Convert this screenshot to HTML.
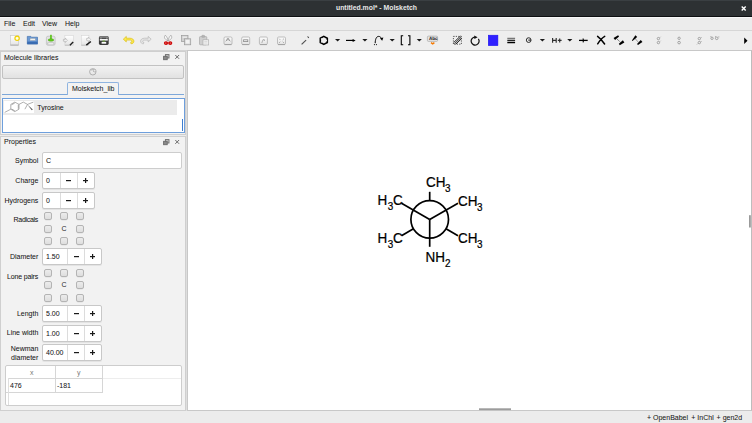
<!DOCTYPE html>
<html><head><meta charset="utf-8">
<style>
*{margin:0;padding:0;box-sizing:border-box}
html,body{width:752px;height:423px;overflow:hidden;background:#ececec;font-family:"Liberation Sans",sans-serif;font-size:7px;color:#141414;position:relative;-webkit-text-stroke:0.04px #111}
.a{position:absolute}
.t{position:absolute;white-space:nowrap;line-height:1}
#title{left:0;top:0;width:752px;height:17px;background:#2d3133;border-bottom:1px solid #0e1012;border-top:1px solid #3a3f42}
#menubar{left:0;top:17px;width:752px;height:14px;background:#ececec;border-top:1px solid #f8f8f8;border-bottom:1px solid #d6d6d6}
#toolbar{left:0;top:31px;width:752px;height:20px;background:#eeeeee;border-bottom:1px solid #d4d4d4}
.dock{position:absolute;border:1px solid #cfcfcf;background:#f2f2f2}
.field{position:absolute;background:#fff;border:1px solid #cdcdcd;border-radius:2px}
.spin{position:absolute;background:#fff;border:1px solid #c8c8c8;border-radius:2px;height:17px;box-shadow:0 1px 0 rgba(0,0,0,0.06)}
.spin .s1,.spin .s2{position:absolute;top:0;height:15px;border-left:1px solid #dcdcdc}
.cb{position:absolute;width:8px;height:8px;border:1px solid #b4b4b4;border-radius:2px;background:linear-gradient(#ececec,#dedede);box-shadow:0 0.5px 0 rgba(0,0,0,0.08)}
.pm{font-size:9px;font-weight:bold}
.mi{width:5px;height:1px;background:#1a1a1a;box-shadow:0 0.6px 0 rgba(26,26,26,.35)}.pl{width:1px;height:5px;background:#1a1a1a;box-shadow:0.6px 0 0 rgba(26,26,26,.35)}.fv{-webkit-text-stroke:0.05px #1e1e1e}.cc{-webkit-text-stroke:0;color:#2a2a2a}
.lbl{position:absolute;white-space:nowrap;line-height:1;text-align:right;width:40px}
</style></head><body>
<div id="title" class="a"></div>
<div class="t" style="left:336px;top:5px;color:#e8e8e8;font-weight:bold;font-size:6.85px;-webkit-text-stroke:0">untitled.mol* - Molsketch</div>
<svg class="a" style="left:738px;top:3px" width="12" height="12"><path d="M3.7 3.6 l4 4 M7.7 3.6 l-4 4" stroke="#fff" stroke-width="1.4"/></svg>
<div id="menubar" class="a"></div>
<div class="t" style="left:4px;top:20.4px">File</div>
<div class="t" style="left:23px;top:20.4px">Edit</div>
<div class="t" style="left:42px;top:20.4px">View</div>
<div class="t" style="left:65px;top:20.4px">Help</div>
<div id="toolbar" class="a"></div>


<!-- toolbar icons -->
<svg class="a" style="left:0;top:0" width="752" height="52" viewBox="0 0 752 52">
<defs>
<linearGradient id="pg" x1="0" y1="0" x2="0" y2="1"><stop offset="0" stop-color="#ffffff"/><stop offset="1" stop-color="#e4e4e4"/></linearGradient>
<linearGradient id="fg" x1="0" y1="0" x2="0" y2="1"><stop offset="0" stop-color="#7aa6d8"/><stop offset="1" stop-color="#3465a4"/></linearGradient>
<linearGradient id="bx" x1="0" y1="0" x2="0" y2="1"><stop offset="0" stop-color="#fdfdfd"/><stop offset="1" stop-color="#e2e2e2"/></linearGradient>
</defs>
<!-- new -->
<rect x="10.4" y="35.6" width="8.2" height="9.5" fill="url(#pg)" stroke="#c4c4c4" stroke-width="0.6"/>
<path d="M10.4 45.1 h8.2" stroke="#9a9a9a" stroke-width="0.7"/>
<circle cx="17.1" cy="38.3" r="2.2" fill="#fff7b0" stroke="#f0d000" stroke-width="1.1"/>
<circle cx="17.1" cy="38.3" r="1.1" fill="#fffef0"/>
<!-- open -->
<path d="M27.3 37.9 v-1.5 h3.6 l0.7 0.8 h5.9 v6.9 h-10.2 z" fill="#6a9ad6" stroke="#3465a4" stroke-width="0.6"/>
<rect x="30" y="38.3" width="5.4" height="2.3" fill="#f2f2ee" stroke="#7a8aa0" stroke-width="0.4"/>
<rect x="27.3" y="41.6" width="10.2" height="2.5" fill="#3a6cb2"/>
<!-- save -->
<rect x="46.4" y="36.2" width="8.7" height="9.1" rx="1.6" fill="#e2e2e2" stroke="#b4b4b4" stroke-width="0.6"/>
<rect x="47" y="42.2" width="7.5" height="2.8" rx="0.8" fill="#c8c8c8"/>
<rect x="48.3" y="43" width="5" height="1.4" fill="#ececec"/>
<rect x="50.1" y="34.8" width="1.7" height="4.4" fill="#5cc41a"/>
<ellipse cx="50.95" cy="40" rx="2.9" ry="1.25" fill="#66cc22" stroke="#3d9a0a" stroke-width="0.4"/>
<!-- import -->
<rect x="64.9" y="35.6" width="8.6" height="9.6" fill="url(#pg)" stroke="#d2d2d2" stroke-width="0.5"/>
<path d="M64.9 45.2 h6" stroke="#aaa" stroke-width="0.6"/>
<path d="M63.4 39.4 h1.9 v-1.3 l2.1 2.2 l-2.1 2.2 v-1.3 h-1.9 z" fill="#f6f6f6" stroke="#a8a8a8" stroke-width="0.6"/>
<path d="M69.9 45.2 l3.3 -3.1" stroke="#1e1e1e" stroke-width="1.4"/>
<!-- export -->
<rect x="81.3" y="35.6" width="7.6" height="9.6" fill="url(#pg)" stroke="#d2d2d2" stroke-width="0.5"/>
<path d="M81.3 45.2 h5" stroke="#aaa" stroke-width="0.6"/>
<path d="M86.6 38.4 h1.7 v-1.4 l2.3 2.4 l-2.3 2.4 v-1.4 h-1.7 z" fill="#f6f6f6" stroke="#b0b0b0" stroke-width="0.6"/>
<path d="M86.3 45.1 l4.5 -3.6" stroke="#1a1a1a" stroke-width="1.6"/>
<!-- print -->
<rect x="98.9" y="36.3" width="9.8" height="8.6" rx="1.4" fill="#3a3a3a"/>
<rect x="99.6" y="36.6" width="8.4" height="2.2" rx="0.8" fill="#8a8a8a"/>
<rect x="101.8" y="37.8" width="4.2" height="0.8" fill="#333"/>
<rect x="99.8" y="39" width="8" height="1.6" fill="#f4f4f4"/>
<rect x="102.5" y="40.6" width="2.6" height="0.9" fill="#6ab02a"/>
<rect x="101.6" y="41.9" width="4.6" height="1.8" fill="#fafafa"/>
<!-- undo -->
<path d="M123.3 39.2 l3 -2.8 v1.8 h3.6 c2.6 0 4 1.4 4 3 c0 1.6 -1.3 2.6 -2.8 2.6 l-0.6 -1.2 c0.8 0 1.3 -0.6 1.3 -1.3 c0 -0.8 -0.8 -1.2 -2 -1.2 h-3.5 v1.8 z" fill="#fce94f" stroke="#d8b800" stroke-width="0.6"/>
<!-- redo -->
<path d="M151.2 39.2 l-3 -2.8 v1.8 h-3.6 c-2.6 0 -4 1.4 -4 3 c0 1.6 1.3 2.6 2.8 2.6 l0.6 -1.2 c-0.8 0 -1.3 -0.6 -1.3 -1.3 c0 -0.8 0.8 -1.2 2 -1.2 h3.5 v1.8 z" fill="#e6e6e6" stroke="#b0b0b0" stroke-width="0.6"/>
<!-- cut -->
<path d="M165.3 35.2 C163.8 37 164.2 39.2 168.1 40.8 C167.6 38.6 167 36.8 165.3 35.2 z" fill="#fafafa" stroke="#9a9a9a" stroke-width="0.7"/>
<path d="M170.9 35.2 C172.4 37 172 39.2 168.1 40.8 C168.6 38.6 169.2 36.8 170.9 35.2 z" fill="#fafafa" stroke="#9a9a9a" stroke-width="0.7"/>
<ellipse cx="166" cy="43.1" rx="2.1" ry="1.9" fill="#cc0000"/>
<ellipse cx="170.2" cy="43.1" rx="2.1" ry="1.9" fill="#cc0000"/>
<ellipse cx="165.8" cy="43.1" rx="0.9" ry="0.5" fill="#e88"/>
<ellipse cx="170.4" cy="43.1" rx="0.9" ry="0.5" fill="#e88"/>
<!-- copy -->
<rect x="181.5" y="35.6" width="6.5" height="6" fill="#d0d0d0" stroke="#9a9a9a" stroke-width="0.7"/>
<rect x="182.6" y="36.6" width="4.3" height="1.2" fill="#eee"/>
<rect x="184.5" y="38.8" width="6.2" height="6" fill="#dadada" stroke="#9a9a9a" stroke-width="0.7"/>
<rect x="185.8" y="40" width="3.6" height="3.5" fill="#f2f2f2"/>
<!-- paste -->
<rect x="199.5" y="36.6" width="7.3" height="8.2" rx="0.8" fill="#cfcfcf" stroke="#a0a0a0" stroke-width="0.6"/>
<rect x="201.8" y="35.3" width="2.8" height="2" rx="0.5" fill="#b5b5b5" stroke="#999" stroke-width="0.4"/>
<rect x="203" y="39.8" width="5.7" height="5.2" fill="#f0f0f0" stroke="#aaa" stroke-width="0.6"/>
<path d="M204.3 41.5 h3 M204.3 43 h3" stroke="#c8c8c8" stroke-width="0.5"/>
<!-- 4 disabled boxes -->
<g stroke="#a8a8a8" stroke-width="0.7" fill="url(#bx)">
<rect x="224" y="37" width="8" height="7.5" rx="1.2"/>
<rect x="241.7" y="37" width="8" height="7.5" rx="1.2"/>
<rect x="259.4" y="37" width="8" height="7.5" rx="1.2"/>
<rect x="277.5" y="37" width="8" height="7.5" rx="1.2"/>
</g>
<g stroke="#8a8a8a" stroke-width="0.8" fill="none">
<path d="M224.5 44.6 h7 M242.2 44.6 h7 M259.9 44.6 h7 M278 44.6 h7" stroke="#999"/>
<path d="M225.6 41.2 l2.4 -1.8 l2.4 1.8 M226.6 39.6 a1.4 1 0 0 1 2.8 0"/>
<rect x="243.6" y="39.8" width="4.2" height="1.8" />
<path d="M261.8 43 l1.2 -3.4 l1.6 0.2 l-0.4 1.2" stroke-width="0.6"/>
<path d="M279 38.6 l1.3 1.3 M284 38.6 l-1.3 1.3 M279 43 l1.3 -1.3 M284 43 l-1.3 -1.3" stroke-width="0.6"/>
</g>
<!-- pen -->
<path d="M301.6 44.3 l4.5 -4.2" stroke="#505050" stroke-width="1.15" fill="none"/>
<path d="M307 36.3 l2.2 0.8 l-0.9 1.1 z" fill="#333"/>
<!-- ring -->
<path d="M323.8 36.4 l3.5 1.9 v4.2 l-3.5 1.9 l-3.5 -1.9 v-4.2 z" fill="none" stroke="#000" stroke-width="1.6" stroke-linejoin="round"/>
<circle cx="321.4" cy="38.9" r="0.6" fill="#f4f4f4"/><circle cx="326.4" cy="40.4" r="0.6" fill="#f4f4f4"/><circle cx="321.4" cy="42" r="0.6" fill="#f4f4f4"/>
<!-- dropdowns -->
<g fill="#1a1a1a">
<path d="M335 39 h5.2 l-2.6 2.6 z"/>
<path d="M362.3 39 h5.2 l-2.6 2.6 z"/>
<path d="M389.6 39 h5.2 l-2.6 2.6 z"/>
<path d="M416.7 39 h5.2 l-2.6 2.6 z"/>
<path d="M539.8 38.9 h5.2 l-2.6 2.6 z"/>
<path d="M567.2 38.9 h5.2 l-2.6 2.6 z"/>
</g>
<!-- arrow -->
<path d="M346 40.4 h7.5" stroke="#000" stroke-width="1.15"/>
<path d="M352.6 38.9 l3 1.5 l-3 1.5 z" fill="#000"/>
<!-- curved arrow -->
<path d="M375.2 43.2 c0 -3.5 1 -6.8 3.4 -6.8 c1.2 0 2 0.6 2.6 1.6" stroke="#000" stroke-width="1" fill="none"/>
<polygon points="380,38.3 383.4,37.6 382.2,40.8" fill="#000"/>
<circle cx="374.4" cy="44.6" r="0.55" fill="#000"/><circle cx="376.4" cy="44.6" r="0.55" fill="#000"/>
<!-- brackets -->
<path d="M403.2 35.8 h-1.9 v9 h1.9 M408 35.8 h1.9 v9 h-1.9" stroke="#000" stroke-width="1.1" fill="none"/>
<!-- Abc -->
<rect x="427.4" y="36.1" width="10.2" height="5.3" rx="1" fill="#e4e4e4" stroke="#a0a0a0" stroke-width="0.6"/>
<text x="428.9" y="40.3" font-family="Liberation Sans" font-size="4.6" font-weight="bold" fill="#222" style="-webkit-text-stroke:0;text-rendering:geometricPrecision">Abc</text>
<path d="M431 42.6 l1.7 1.3 l1.7 -1.3" stroke="#f57900" stroke-width="1.4" fill="none"/>
<!-- hatched -->
<rect x="453.4" y="36.4" width="8" height="7.8" fill="none" stroke="#333" stroke-width="0.8" stroke-dasharray="1.2 1.2"/>
<path d="M453.6 42.6 l6.8 -6.5 M454.4 43.8 l7 -6.8 M455.8 44.2 l5.7 -5.6" stroke="#111" stroke-width="0.9"/>
<!-- rotate -->
<path d="M478.4 38.8 A4 4 0 1 1 475.1 37.1" stroke="#111" stroke-width="1.25" fill="none"/>
<polygon points="474.2,35.6 477.6,37.3 474.4,39" fill="#111"/>
<!-- blue -->
<rect x="487.6" y="34.6" width="11" height="11.4" fill="#ffffe6" opacity="0.7"/>
<rect x="488.3" y="35.2" width="9.6" height="10.4" fill="#3020ff" stroke="#1a10f0" stroke-width="0.6"/>
<!-- lines -->
<path d="M507.3 38.3 h7.8" stroke="#333" stroke-width="0.8"/>
<path d="M507.3 40.3 h7.8" stroke="#000" stroke-width="1.1"/>
<path d="M507.3 42.5 h7.8" stroke="#000" stroke-width="1.5"/>
<!-- charge -->
<circle cx="528.7" cy="40.1" r="2.35" fill="none" stroke="#222" stroke-width="0.95"/>
<path d="M528.3 40.1 h2.6" stroke="#222" stroke-width="1.1"/>
<!-- H+ -->
<path d="M552.6 37.9 v4.9 M556.2 37.9 v4.9 M552.6 40.3 h3.6 M557.8 40.4 h3.8 M559.7 38.5 v3.9" stroke="#2e2e2e" stroke-width="1.15" fill="none"/>
<!-- -|- -->
<path d="M579 40.4 h8.7" stroke="#000" stroke-width="1.3"/>
<path d="M583.3 38.5 c-0.4 1 0.4 1.6 -0.2 3.8" stroke="#000" stroke-width="1.1" fill="none"/>
<!-- X -->
<path d="M597.6 36.4 c3 2.2 5 4.8 7 7.6 M604.7 36.4 c-3 1.6 -5 4.4 -7 7.4" stroke="#000" stroke-width="1.5" stroke-linecap="round" fill="none"/>
<!-- wedge bonds -->
<polygon points="615.06,40.05 613.54,37.95 618.13,35.25 619.07,36.55" fill="#000"/>
<polygon points="619.77,45.15 618.83,43.85 622.84,40.35 624.36,42.45" fill="#000"/>
<path d="M617.2 39.2 L620.3 42.1" stroke="#000" stroke-width="0.7" stroke-dasharray="0.9 0.7"/>
<polygon points="632.5,40.97 631.9,40.43 635.4,35.3 637.2,36.9" fill="#000"/>
<polygon points="638.01,45.12 636.99,43.88 640.77,40.1 642.43,42.1" fill="#000"/>
<path d="M634.9 38.3 L638.2 42.1" stroke="#000" stroke-width="0.7" stroke-dasharray="0.9 0.7"/>
<!-- small O O icons -->
<g stroke="#808080" stroke-width="0.65" fill="none">
<circle cx="658.4" cy="38.6" r="1.2"/><circle cx="658.4" cy="42.6" r="1.2"/>
<path d="M660.6 36.8 l-0.8 0.8 M660.6 40.8 l-0.8 0.8"/>
<circle cx="679.1" cy="38.3" r="1.2"/><circle cx="679.1" cy="42.6" r="1.3"/>
<circle cx="699.3" cy="38.6" r="1.2"/><circle cx="699.3" cy="42.6" r="1.2"/>
<path d="M701.4 37.2 l-0.6 0.9 M701.4 41.2 l-0.6 0.9 M697 44.4 l0.6 -0.7"/>
<circle cx="712" cy="38.3" r="1.2"/><circle cx="716.7" cy="38.3" r="1.3"/>
<path d="M710.6 36.2 l0.7 0.8 M715.3 36.2 l0.7 0.8 M718.8 36.4 v1"/>
</g>
<!-- more arrow -->
<path d="M744.2 37.5 l3.3 3.2 l-3.3 3.2 z" fill="#000"/>
</svg>
<!-- canvas -->
<div class="a" style="left:186px;top:51px;width:1px;height:360px;background:#dedede"></div>
<div class="a" style="left:187px;top:50px;width:565px;height:361px;background:#fff;border:1px solid #c8c8c8;border-right:1px solid #bdbdbd"></div>


<!-- molecule -->
<svg class="a" style="left:0;top:0" width="752" height="423" viewBox="0 0 752 423">
<g stroke="#000" stroke-width="1.7" fill="none" stroke-linecap="butt">
<circle cx="429.7" cy="219.4" r="18.8"/>
<line x1="429.7" y1="191.8" x2="429.7" y2="200.6"/>
<line x1="413.4" y1="228.8" x2="401.5" y2="235.7"/>
<line x1="446" y1="228.8" x2="458" y2="235.7"/>
<line x1="429.7" y1="219.4" x2="401.5" y2="203.3"/>
<line x1="429.7" y1="219.4" x2="458" y2="203.3"/>
<line x1="429.7" y1="219.4" x2="429.7" y2="246.8"/>
</g>
<g font-family="Liberation Sans" fill="#000" font-size="15" stroke="#000" stroke-width="0.25">
<text transform="translate(426,187.3) scale(0.9,1)">CH<tspan font-size="11" dy="4.7" dx="-0.5">3</tspan></text>
<text transform="translate(377.4,205.3) scale(0.9,1)">H<tspan font-size="11" dy="4.7" dx="0.8">3</tspan><tspan dy="-4.7" dx="-0.4">C</tspan></text>
<text transform="translate(458,205.8) scale(0.9,1)">CH<tspan font-size="11" dy="4.7" dx="-0.4">3</tspan></text>
<text transform="translate(377.4,243.3) scale(0.9,1)">H<tspan font-size="11" dy="4.7" dx="0.8">3</tspan><tspan dy="-4.7" dx="-0.4">C</tspan></text>
<text transform="translate(458,243.3) scale(0.9,1)">CH<tspan font-size="11" dy="4.7" dx="-0.4">3</tspan></text>
<text transform="translate(425.6,261.8) scale(0.9,1)">NH<tspan font-size="11" dy="4.7" dx="0">2</tspan></text>
</g>
<rect x="749" y="215.2" width="1.8" height="12.3" fill="#9a9a9a"/>
<rect x="479" y="408.3" width="32" height="1.8" fill="#9c9c9c"/>
</svg>
<!-- dock 1 -->
<div class="dock" style="left:0px;top:51px;width:186px;height:84px"></div>
<div class="t" style="left:4px;top:54px">Molecule libraries</div>
<div class="a" style="left:2px;top:65px;width:182px;height:14px;border:1px solid #c2c2c2;border-radius:2px;background:linear-gradient(#f2f2f2,#e2e2e2)"></div>
<div class="a" style="left:67px;top:82px;width:52px;height:13px;border:1px solid #8fb4e0;border-bottom:none;border-radius:2px 2px 0 0;background:#f3f3f3"></div>
<div class="t" style="left:72px;top:85px">Molsketch_lib</div>
<div class="a" style="left:2px;top:94px;width:65px;height:1px;background:#7da7d9"></div>
<div class="a" style="left:119px;top:94px;width:65px;height:1px;background:#7da7d9"></div>
<div class="a" style="left:2px;top:98px;width:183px;height:35px;border:1px solid #6e9fdc;background:#fff"></div>
<div class="a" style="left:3px;top:100px;width:174px;height:15px;background:#ebebeb"></div>
<div class="a" style="left:4.4px;top:100.7px;width:29.8px;height:12.5px;background:#fff"></div>
<div class="t" style="left:37.3px;top:104px">Tyrosine</div>
<div class="a" style="left:182px;top:119px;width:1px;height:12px;background:#3d7dd0"></div>

<!-- dock 2 -->
<div class="dock" style="left:0px;top:136px;width:186px;height:275px"></div>
<div class="t" style="left:4px;top:138.3px">Properties</div>
<div class="field" style="left:42px;top:152px;width:140px;height:17px"></div>
<div class="lbl" style="left:-21.70px;width:60px;top:157.2px;">Symbol</div>
<div class="t fv" style="left:46px;top:157.2px">C</div>
<div class="spin" style="left:42px;top:172px;width:52.5px"><div class="s1" style="left:16.6px;width:17px"></div><div class="s2" style="left:33.6px;width:17px"></div></div>
<div class="lbl" style="left:-21.70px;width:60px;top:177.0px;">Charge</div>
<div class="t fv" style="left:46px;top:176.5px">0</div>
<div class="a mi" style="left:66px;top:180px"></div>
<div class="a mi" style="left:83px;top:180px"></div><div class="a pl" style="left:85px;top:178px"></div>
<div class="spin" style="left:42px;top:192px;width:52.5px"><div class="s1" style="left:16.6px;width:17px"></div><div class="s2" style="left:33.6px;width:17px"></div></div>
<div class="lbl" style="left:-21.70px;width:60px;top:197.0px;">Hydrogens</div>
<div class="t fv" style="left:46px;top:196.5px">0</div>
<div class="a mi" style="left:66px;top:200px"></div>
<div class="a mi" style="left:83px;top:200px"></div><div class="a pl" style="left:85px;top:198px"></div>
<div class="cb" style="left:44.2px;top:212.4px"></div>
<div class="cb" style="left:60.0px;top:212.4px"></div>
<div class="cb" style="left:76.1px;top:212.4px"></div>
<div class="cb" style="left:44.2px;top:224.7px"></div>
<div class="t cc" style="left:61.6px;top:224.8px">C</div>
<div class="cb" style="left:76.1px;top:224.7px"></div>
<div class="cb" style="left:44.2px;top:237.0px"></div>
<div class="cb" style="left:60.0px;top:237.0px"></div>
<div class="cb" style="left:76.1px;top:237.0px"></div>
<div class="lbl" style="left:-22.00px;width:60px;top:215.8px;letter-spacing:-0.3px;">Radicals</div>
<div class="spin" style="left:42px;top:248px;width:59.5px"><div class="s1" style="left:24.3px;width:17px"></div><div class="s2" style="left:41.3px;width:17px"></div></div>
<div class="lbl" style="left:-21.70px;width:60px;top:253.0px;">Diameter</div>
<div class="t fv" style="left:46px;top:252.5px">1.50</div>
<div class="a mi" style="left:74px;top:256px"></div>
<div class="a mi" style="left:90px;top:256px"></div><div class="a pl" style="left:92px;top:254px"></div>
<div class="cb" style="left:44.2px;top:268.9px"></div>
<div class="cb" style="left:60.0px;top:268.9px"></div>
<div class="cb" style="left:76.1px;top:268.9px"></div>
<div class="cb" style="left:44.2px;top:281.2px"></div>
<div class="t cc" style="left:61.6px;top:281.3px">C</div>
<div class="cb" style="left:76.1px;top:281.2px"></div>
<div class="cb" style="left:44.2px;top:293.5px"></div>
<div class="cb" style="left:60.0px;top:293.5px"></div>
<div class="cb" style="left:76.1px;top:293.5px"></div>
<div class="lbl" style="left:-21.84px;width:60px;top:272.5px;letter-spacing:-0.14px;">Lone pairs</div>
<div class="spin" style="left:42px;top:305px;width:59.5px"><div class="s1" style="left:24.3px;width:17px"></div><div class="s2" style="left:41.3px;width:17px"></div></div>
<div class="lbl" style="left:-21.70px;width:60px;top:309.5px;">Length</div>
<div class="t fv" style="left:46px;top:309.5px">5.00</div>
<div class="a mi" style="left:74px;top:313px"></div>
<div class="a mi" style="left:90px;top:313px"></div><div class="a pl" style="left:92px;top:311px"></div>
<div class="spin" style="left:42px;top:325px;width:59.5px"><div class="s1" style="left:24.3px;width:17px"></div><div class="s2" style="left:41.3px;width:17px"></div></div>
<div class="lbl" style="left:-21.70px;width:60px;top:329.3px;">Line width</div>
<div class="t fv" style="left:46px;top:329.5px">1.00</div>
<div class="a mi" style="left:74px;top:333px"></div>
<div class="a mi" style="left:90px;top:333px"></div><div class="a pl" style="left:92px;top:331px"></div>
<div class="spin" style="left:42px;top:344px;width:59.5px"><div class="s1" style="left:24.3px;width:17px"></div><div class="s2" style="left:41.3px;width:17px"></div></div>
<div class="lbl" style="left:-21.700000000000003px;width:60px;top:344.5px">Newman</div>
<div class="lbl" style="left:-21.700000000000003px;width:60px;top:353.8px">diameter</div>
<div class="t fv" style="left:46px;top:348.5px">40.00</div>
<div class="a mi" style="left:74px;top:352px"></div>
<div class="a mi" style="left:90px;top:352px"></div><div class="a pl" style="left:92px;top:350px"></div>

<!-- table -->
<div class="a" style="left:5px;top:365px;width:177px;height:41px;border:1px solid #cdcdcd;border-radius:2px;background:#fff"></div>
<div class="a" style="left:103px;top:378px;width:78px;height:1px;background:#ededed"></div>
<div class="a" style="left:55px;top:366px;width:1px;height:26px;background:#d6d6d6"></div>
<div class="a" style="left:102px;top:366px;width:1px;height:26px;background:#d6d6d6"></div>
<div class="a" style="left:8px;top:378px;width:95px;height:1px;background:#d6d6d6"></div>
<div class="a" style="left:6px;top:392px;width:97px;height:1px;background:#d6d6d6"></div>
<div class="a" style="left:8px;top:378px;width:1px;height:27px;background:#dedede"></div>
<div class="t" style="left:30px;top:369px;color:#777;-webkit-text-stroke:0">x</div>
<div class="t" style="left:77px;top:369px;color:#777;-webkit-text-stroke:0">y</div>
<div class="t" style="left:10px;top:382px">476</div>
<div class="t" style="left:57px;top:382px">-181</div>


<!-- dock icons -->
<svg class="a" style="left:0;top:0" width="190" height="150" viewBox="0 0 190 150">
<g fill="none" stroke="#6a6a6a" stroke-width="0.9">
<rect x="165.4" y="54.6" width="3.6" height="3.4" fill="#c8c8c8"/>
<rect x="163.6" y="56.3" width="3.6" height="3.4" fill="#8a8a8a"/>
<path d="M175.3 55 l3.8 3.8 M179.1 55 l-3.8 3.8" stroke-width="1"/>
<rect x="165.4" y="139.6" width="3.6" height="3.4" fill="#c8c8c8"/>
<rect x="163.6" y="141.3" width="3.6" height="3.4" fill="#8a8a8a"/>
<path d="M175.3 140 l3.8 3.8 M179.1 140 l-3.8 3.8" stroke-width="1"/>
</g>
<!-- button icon -->
<circle cx="92.8" cy="71.8" r="3.2" fill="none" stroke="#a0a0a0" stroke-width="0.8"/>
<path d="M91 70.5 a2 2 0 0 1 3.5 0.2 l-1 1 " fill="none" stroke="#a0a0a0" stroke-width="0.7"/>
<circle cx="94.6" cy="70.6" r="1.3" fill="#e8e8e8" stroke="#a0a0a0" stroke-width="0.6"/>
<!-- tyrosine thumbnail -->
<g fill="none" stroke="#7a7a7a" stroke-width="0.6">
<path d="M10.8 104.4 L14.8 102.1 L19 104.4 L19 109.2 L14.8 111.6 L10.8 109.2 Z"/>
<path d="M11.6 104.8 L14.8 103 M18.3 104.8 L18.3 108.8 M14.8 110.8 L11.6 109"/>
<path d="M10.8 109.2 L4.7 112.4"/>
<path d="M19 104.4 L23.3 102.1 L27.5 104.4 L33.4 102.1"/>
<path d="M27.5 104.4 L24.9 109.2"/>
</g>
<path d="M27.3 104.6 L32.8 109.6 L31.8 110.3 Z" fill="#555"/>
</svg>
<!-- status -->
<div class="t" style="left:647px;top:414px">+ OpenBabel</div><div class="t" style="left:691.3px;top:414px">+ InChI</div><div class="t" style="left:716.6px;top:414px">+ gen2d</div>
</body></html>
